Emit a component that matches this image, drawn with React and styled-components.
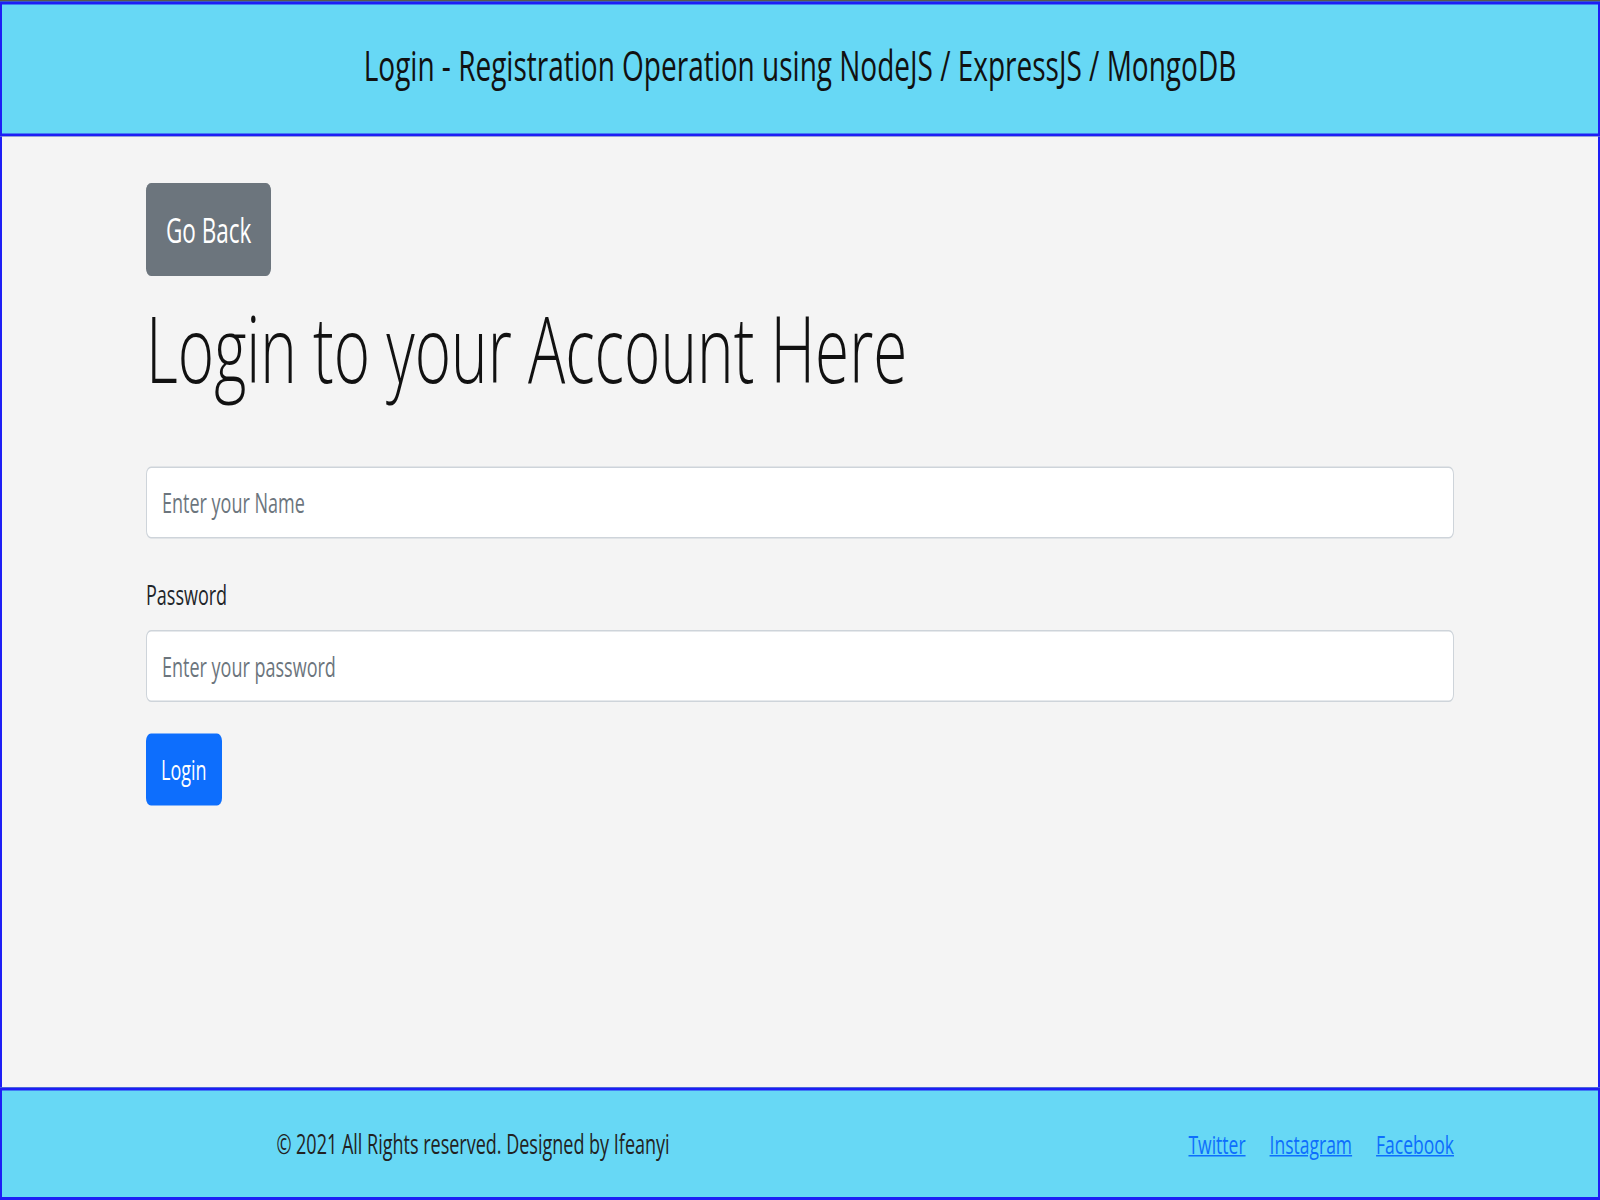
import React from "react";
import styled, { createGlobalStyle } from "styled-components";

// the reference was taken at 1600x800 and stretched to 1600x1200,
// so the page is laid out at natural size and stretched the same way
const GlobalStyle = createGlobalStyle`
  html, body {
    margin: 0;
    padding: 0;
    background: #2b2b2b;
  }
  body {
    min-height: 1200px;
  }
  * {
    box-sizing: border-box;
  }
`;

const Page = styled.div`
  width: 1600px;
  height: 800px;
  display: flex;
  flex-direction: column;
  transform: scaleY(1.5);
  transform-origin: top left;
  font-family: "Open Sans", "Noto Sans", sans-serif;
  color: #212529;
  border-top: 1px solid #5a5a4a;
`;

const Header = styled.header`
  height: 90px;
  background: #67d8f5;
  border: 2px solid #1e1ef5;
  display: flex;
  align-items: center;
  justify-content: center;
  padding-bottom: 7px;
`;

const Title = styled.h1`
  margin: 0;
  font-size: 28px;
  font-weight: 400;
  color: #111;
`;

const Main = styled.main`
  flex: 1;
  background: #f4f4f4;
  border-left: 2px solid #1e1ef5;
  border-right: 2px solid #1e1ef5;
  padding-top: 31px;
`;

const Container = styled.div`
  width: 1308px;
  margin: 0 auto;
`;

const Button = styled.button`
  display: inline-flex;
  align-items: center;
  border: none;
  font-family: inherit;
  color: #fff;
  background: ${p => (p.variant === "primary" ? "#0d6efd" : "#6c757d")};
  height: ${p => (p.big ? "62px" : "48px")};
  padding: 0 ${p => (p.big ? "20px" : "15px")};
  font-size: ${p => (p.big ? "22.5px" : "18px")};
  border-radius: 5px;
  cursor: pointer;
`;

const Heading = styled.h2`
  margin: 10px 0 0;
  font-size: 62px;
  font-weight: 300;
  line-height: 1.2;
  color: #111;
`;

const Form = styled.form`
  margin-top: 43px;
  display: flex;
  flex-direction: column;
  align-items: flex-start;
`;

const Input = styled.input`
  width: 100%;
  height: 48px;
  padding: 0 15px;
  font-family: inherit;
  font-size: 18px;
  background: #fff;
  border: 1px solid #ced4da;
  border-radius: 5px;
  &::placeholder {
    color: #6c757d;
  }
`;

const Label = styled.label`
  font-size: 18px;
  line-height: 30px;
  margin: 13px 0 0;
  padding: 9px 0;
  color: #212529;
`;

const SubmitRow = styled.div`
  margin-top: 21px;
`;

const Footer = styled.footer`
  height: 75px;
  background: #67d8f5;
  border: 2px solid #1e1ef5;
  display: flex;
  align-items: center;
  padding-bottom: 2px;
`;

const FooterRow = styled(Container)`
  display: grid;
  grid-template-columns: 1fr 1fr;
  align-items: center;
`;

const Copy = styled.p`
  margin: 0;
  text-align: center;
  font-size: 18px;
  color: #222;
`;

const Links = styled.div`
  display: flex;
  justify-content: flex-end;
  gap: 24px;
`;

const Link = styled.a`
  color: #0d6efd;
  font-size: 17.5px;
  text-decoration: underline;
`;

export default function App() {
  return (
    <>
      <GlobalStyle />
      <Page>
        <Header>
          <Title>Login - Registration Operation using NodeJS / ExpressJS / MongoDB</Title>
        </Header>
        <Main>
          <Container>
            <Button big type="button">Go Back</Button>
            <Heading>Login to your Account Here</Heading>
            <Form onSubmit={e => e.preventDefault()}>
              <Input type="text" placeholder="Enter your Name" />
              <Label htmlFor="password">Password</Label>
              <Input id="password" type="password" placeholder="Enter your password" />
              <SubmitRow>
                <Button variant="primary" type="submit">Login</Button>
              </SubmitRow>
            </Form>
          </Container>
        </Main>
        <Footer>
          <FooterRow>
            <Copy>© 2021 All Rights reserved. Designed by Ifeanyi</Copy>
            <Links>
              <Link href="#">Twitter</Link>
              <Link href="#">Instagram</Link>
              <Link href="#">Facebook</Link>
            </Links>
          </FooterRow>
        </Footer>
      </Page>
    </>
  );
}
